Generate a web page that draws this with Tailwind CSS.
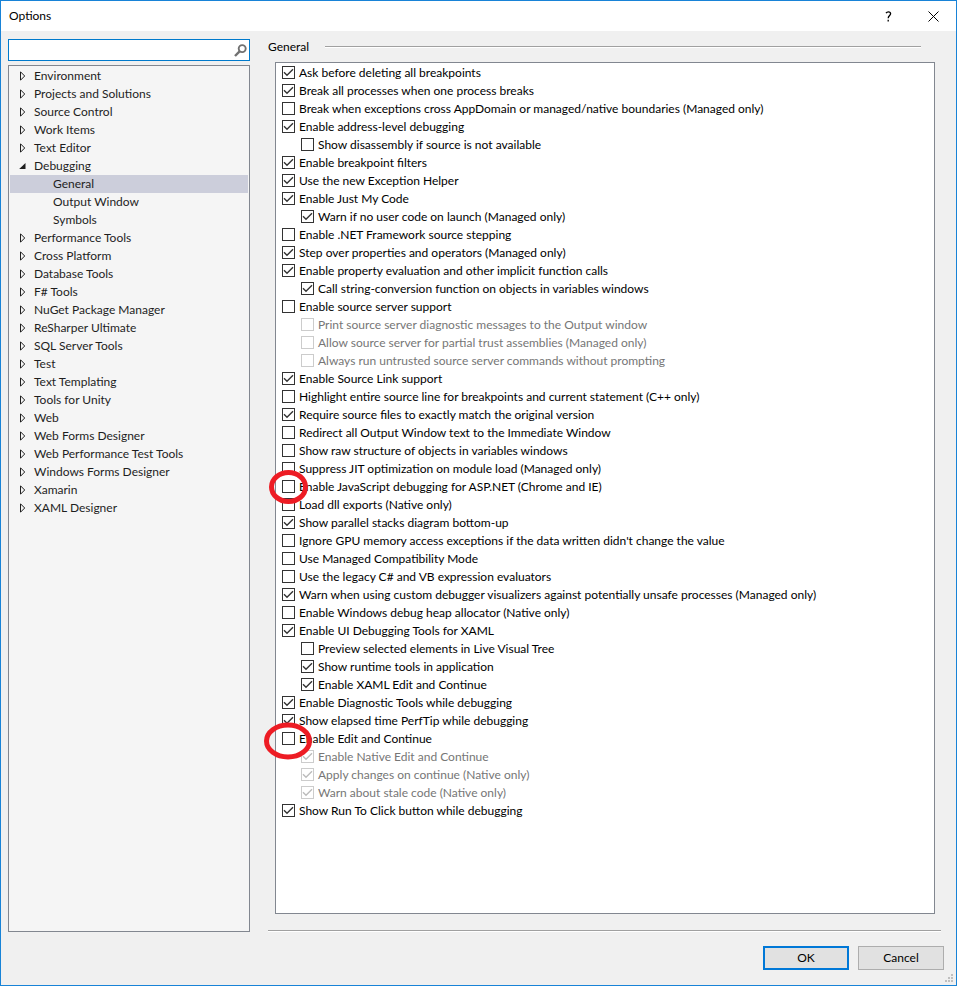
<!DOCTYPE html>
<html lang="en">

<head>
    <meta charset="UTF-8">
    <meta name="viewport" content="width=device-width, initial-scale=1.0">
    <title>Options</title>
    <script src="https://cdn.jsdelivr.net/npm/@tailwindcss/browser@4"></script>
</head>

<body>
    <div class="flex min-h-screen w-full flex-col border border-[#1883d7] bg-[#f0f0f0] font-['Segoe_UI','Lato',sans-serif] text-[12px] leading-[18px] text-black">
        <header class="flex h-[30px] items-center bg-white pl-2">
            <h1 class="flex-1">Options</h1>
            <button type="button" aria-label="Help" class="flex h-full w-11 items-center justify-center">
                <svg width="7" height="11" viewBox="0 0 7 11" fill="none" stroke="#000" stroke-width="1.3">
                    <path d="M1 2.2C1.6 1.2 2.4.8 3.4.8 4.7.8 5.6 1.5 5.6 2.7 5.6 4.4 3.2 4.6 3.2 7.2M3.2 8.8v1.6" />
                </svg>
            </button>
            <button type="button" aria-label="Close" class="flex h-full w-[46px] items-center justify-center">
                <svg width="11" height="11" viewBox="0 0 11 11" stroke="#000">
                    <path d="M.5.5l10 10M10.5.5l-10 10" />
                </svg>
            </button>
        </header>

        <main class="flex flex-1 pt-2 pl-[7px]">
            <aside class="mb-[53px] flex w-[242px] flex-col gap-1">
                <div class="flex h-[22px] items-center border border-[#007acc] bg-white pr-[2px]">
                    <input type="text" aria-label="Search options" class="h-full min-w-0 flex-1 px-1 outline-none">
                    <svg width="13" height="13" viewBox="0 0 13 13" fill="none" stroke="#717171">
                        <circle cx="8.2" cy="4.6" r="3.5" stroke-width="1.9" />
                        <path d="M5.6 7.4L1 12" stroke-width="2.4" />
                    </svg>
                </div>
                <ul id="tree" class="flex-1 border border-[#828790] bg-[#f5f5f5] p-px text-[#1e1e1e]"></ul>
            </aside>

            <section class="ml-[18px] flex flex-1 flex-col pr-3">
                <div class="flex h-4 items-center gap-4 pr-[23px]">
                    <h2>General</h2>
                    <div class="h-[2px] flex-1 border-b border-white bg-[#a0a0a0]"></div>
                </div>
                <ul id="options" class="mt-[7px] mr-[9px] ml-[7px] flex-1 border border-[#828790] bg-white py-px pl-[6px]"></ul>
                <div class="mt-4 mr-[3px] h-[2px] border-b border-white bg-[#a0a0a0]"></div>
                <div class="mt-[14px] mb-[15px] flex justify-end gap-[9px]">
                    <button type="button" class="h-6 w-[86px] border-2 border-[#0078d7] bg-[#e1e1e1] leading-5">OK</button>
                    <button type="button" class="h-6 w-[86px] border border-[#adadad] bg-[#e1e1e1] leading-5">Cancel</button>
                </div>
            </section>
        </main>

        <!-- resize grip -->
        <svg class="absolute right-1 bottom-1" width="8" height="8" viewBox="0 0 8 8" fill="#bfbfbf">
            <path d="M6 0h2v2H6zM3 3h2v2H3zM6 3h2v2H6zM0 6h2v2H0zM3 6h2v2H3zM6 6h2v2H6z" />
        </svg>
    </div>

    <script>
        const tree = [
            "Environment", "Projects and Solutions", "Source Control", "Work Items", "Text Editor",
            { name: "Debugging", children: ["General", "Output Window", "Symbols"] },
            "Performance Tools", "Cross Platform", "Database Tools", "F# Tools", "NuGet Package Manager",
            "ReSharper Ultimate", "SQL Server Tools", "Test", "Text Templating", "Tools for Unity", "Web",
            "Web Forms Designer", "Web Performance Test Tools", "Windows Forms Designer", "Xamarin", "XAML Designer"
        ];

        // x = checked, c = child, d = disabled, r / R = small / large red ring
        const options = [
            ["x", "Ask before deleting all breakpoints"],
            ["x", "Break all processes when one process breaks"],
            ["", "Break when exceptions cross AppDomain or managed/native boundaries (Managed only)"],
            ["x", "Enable address-level debugging"],
            ["c", "Show disassembly if source is not available"],
            ["x", "Enable breakpoint filters"],
            ["x", "Use the new Exception Helper"],
            ["x", "Enable Just My Code"],
            ["xc", "Warn if no user code on launch (Managed only)"],
            ["", "Enable .NET Framework source stepping"],
            ["x", "Step over properties and operators (Managed only)"],
            ["x", "Enable property evaluation and other implicit function calls"],
            ["xc", "Call string-conversion function on objects in variables windows"],
            ["", "Enable source server support"],
            ["cd", "Print source server diagnostic messages to the Output window"],
            ["cd", "Allow source server for partial trust assemblies (Managed only)"],
            ["cd", "Always run untrusted source server commands without prompting"],
            ["x", "Enable Source Link support"],
            ["", "Highlight entire source line for breakpoints and current statement (C++ only)"],
            ["x", "Require source files to exactly match the original version"],
            ["", "Redirect all Output Window text to the Immediate Window"],
            ["", "Show raw structure of objects in variables windows"],
            ["", "Suppress JIT optimization on module load (Managed only)"],
            ["r", "Enable JavaScript debugging for ASP.NET (Chrome and IE)"],
            ["", "Load dll exports (Native only)"],
            ["x", "Show parallel stacks diagram bottom-up"],
            ["", "Ignore GPU memory access exceptions if the data written didn't change the value"],
            ["", "Use Managed Compatibility Mode"],
            ["", "Use the legacy C# and VB expression evaluators"],
            ["x", "Warn when using custom debugger visualizers against potentially unsafe processes (Managed only)"],
            ["", "Enable Windows debug heap allocator (Native only)"],
            ["x", "Enable UI Debugging Tools for XAML"],
            ["c", "Preview selected elements in Live Visual Tree"],
            ["xc", "Show runtime tools in application"],
            ["xc", "Enable XAML Edit and Continue"],
            ["x", "Enable Diagnostic Tools while debugging"],
            ["x", "Show elapsed time PerfTip while debugging"],
            ["R", "Enable Edit and Continue"],
            ["xcd", "Enable Native Edit and Continue"],
            ["xcd", "Apply changes on continue (Native only)"],
            ["xcd", "Warn about stale code (Native only)"],
            ["x", "Show Run To Click button while debugging"]
        ];

        const closedArrow = '<svg width="6" height="10" viewBox="0 0 6 10" fill="none" stroke="#1e1e1e"><path d="M.5.8v8.4L4.7 5z"/></svg>';
        const openArrow = '<svg class="-ml-px" width="7" height="6" viewBox="0 0 7 6" fill="#1e1e1e"><path d="M6.5 0v6H.2z"/></svg>';

        document.getElementById("tree").innerHTML = tree.map(item => {
            const open = Boolean(item.children);
            const children = open ? `<ul>${item.children.map((child, i) =>
                `<li class="${i == 0 ? "bg-[#cccedb]" : ""}"><button type="button" class="block h-[18px] w-full pl-[43px] text-left">${child}</button></li>`
            ).join("")}</ul>` : "";
            return `<li><button type="button" aria-expanded="${open}" class="flex h-[18px] w-full items-center pl-[10px]">
                <span class="w-[14px]">${open ? openArrow : closedArrow}</span>${open ? item.name : item}</button>${children}</li>`;
        }).join("");

        const rings = {
            r: '<svg class="pointer-events-none absolute -top-2 -left-[13px] z-10" width="40" height="35" fill="none" stroke="#ed1c24" stroke-width="5"><ellipse cx="19.5" cy="17" rx="17" ry="14.5"/></svg>',
            R: '<svg class="pointer-events-none absolute -top-2 -left-[18px] z-10" width="48" height="38" fill="none" stroke="#ed1c24" stroke-width="5"><ellipse cx="24" cy="19" rx="21.5" ry="16"/></svg>'
        };

        document.getElementById("options").innerHTML = options.map(([flags, text]) => {
            const disabled = flags.includes("d");
            return `<li class="relative h-[18px] ${flags.includes("c") ? "pl-[19px]" : ""}">
                <label class="inline-flex items-center gap-1 whitespace-nowrap ${disabled ? "text-[#767676]" : ""}">
                    <span class="grid pb-px">
                        <input type="checkbox" ${flags.includes("x") ? "checked" : ""} ${disabled ? "disabled" : ""}
                            class="peer col-start-1 row-start-1 size-[13px] appearance-none border border-[#333] bg-white disabled:border-[#ccc]">
                        <svg class="invisible col-start-1 row-start-1 text-[#333] peer-checked:visible peer-disabled:text-[#bcbcbc]" width="13" height="13" viewBox="0 0 13 13" fill="none" stroke="currentColor" stroke-width="1.4"><path d="M2 6.3l3 3L11 3.2"/></svg>
                    </span>
                    ${text}
                </label>
                ${rings[flags] || ""}
            </li>`;
        }).join("");
    </script>
</body>

</html>
